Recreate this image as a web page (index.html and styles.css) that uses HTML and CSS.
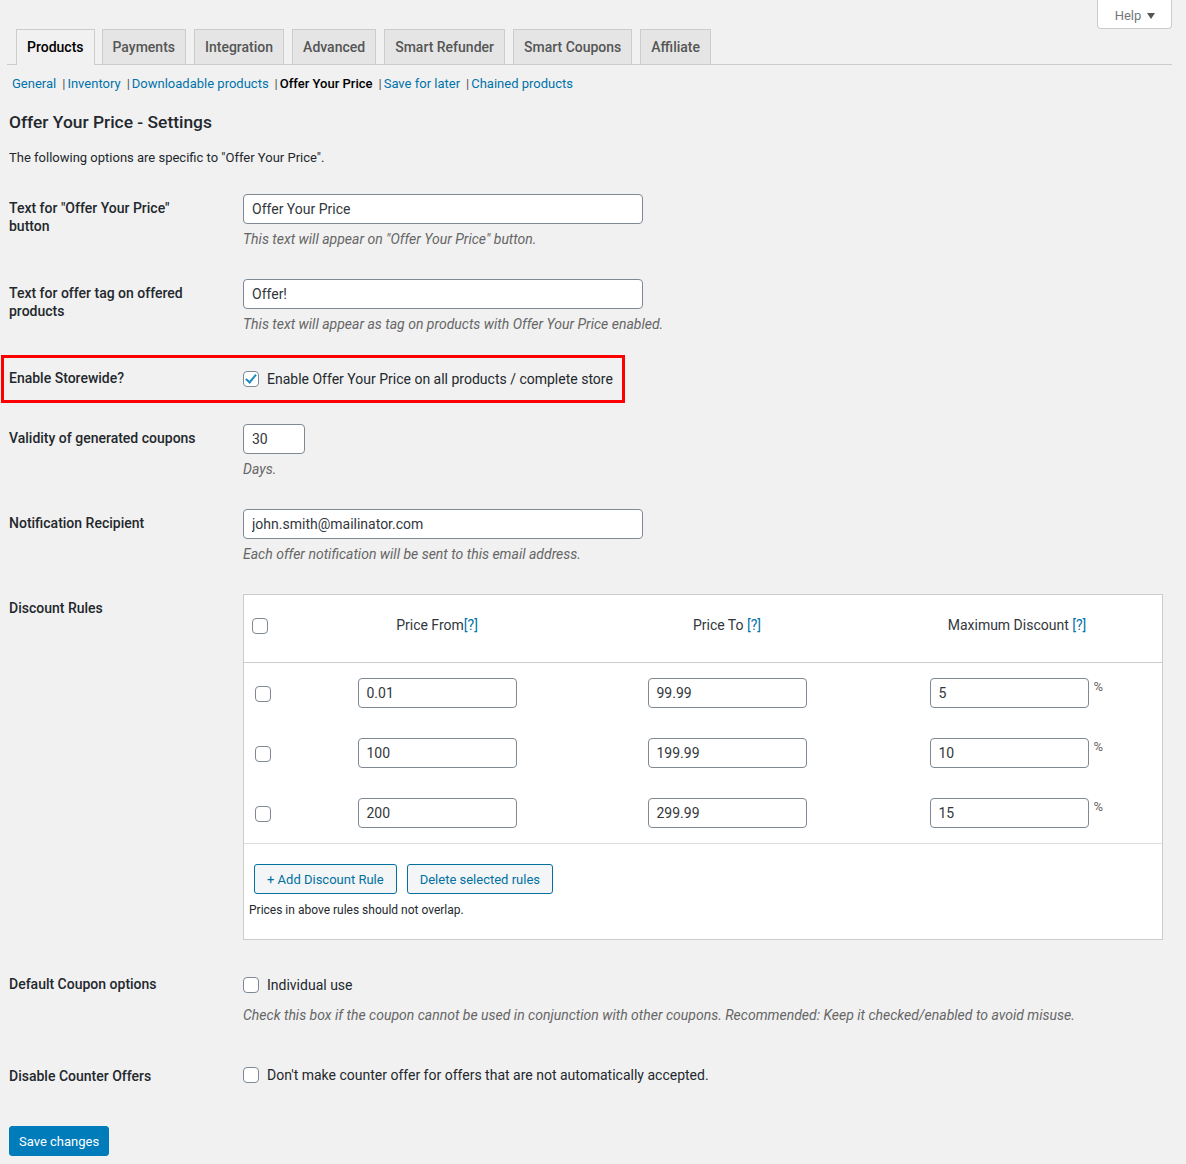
FILE: index.html
```
<!DOCTYPE html>
<html lang="en">
<head>
<meta charset="utf-8">
<title>Offer Your Price - Settings</title>
<link rel="stylesheet" href="styles.css">
</head>
<body>
<div class="wrap">
  <div class="meta">
    <button class="help" type="button">Help <span class="caret"></span></button>
  </div>
  <nav class="tabs">
    <a class="tab active">Products</a>
    <a class="tab">Payments</a>
    <a class="tab">Integration</a>
    <a class="tab">Advanced</a>
    <a class="tab">Smart Refunder</a>
    <a class="tab">Smart Coupons</a>
    <a class="tab">Affiliate</a>
  </nav>
  <ul class="subsub">
    <li><a class="sublink">General</a><span class="sep">|</span></li>
    <li><a class="sublink">Inventory</a><span class="sep">|</span></li>
    <li><a class="sublink">Downloadable products</a><span class="sep">|</span></li>
    <li><a class="sublink current">Offer Your Price</a><span class="sep">|</span></li>
    <li><a class="sublink">Save for later</a><span class="sep">|</span></li>
    <li><a class="sublink">Chained products</a></li>
  </ul>
  <div class="content">
    <h2 class="title">Offer Your Price - Settings</h2>
    <p class="intro">The following options are specific to "Offer Your Price".</p>

    <div class="row">
      <div class="label">Text for "Offer Your Price" button</div>
      <div class="field">
        <input class="text wide" type="text" value="Offer Your Price">
        <p class="desc">This text will appear on "Offer Your Price" button.</p>
      </div>
    </div>

    <div class="row">
      <div class="label">Text for offer tag on offered products</div>
      <div class="field">
        <input class="text wide" type="text" value="Offer!">
        <p class="desc">This text will appear as tag on products with Offer Your Price enabled.</p>
      </div>
    </div>

    <div class="row highlight">
      <div class="label">Enable Storewide?</div>
      <div class="field">
        <label class="check-line"><input class="cb" type="checkbox" checked> Enable Offer Your Price on all products / complete store</label>
      </div>
    </div>

    <div class="row">
      <div class="label">Validity of generated coupons</div>
      <div class="field">
        <input class="text short" type="text" value="30">
        <p class="desc">Days.</p>
      </div>
    </div>

    <div class="row">
      <div class="label">Notification Recipient</div>
      <div class="field">
        <input class="text wide" type="text" value="john.smith@mailinator.com">
        <p class="desc">Each offer notification will be sent to this email address.</p>
      </div>
    </div>

    <div class="row">
      <div class="label">Discount Rules</div>
      <div class="field">
        <div class="rules">
          <table class="rules-table">
            <thead>
              <tr>
                <th class="col-check head-check"><input class="cb" type="checkbox"></th>
                <th class="col">Price From<a class="tip">[?]</a></th>
                <th class="col">Price To <a class="tip">[?]</a></th>
                <th class="col">Maximum Discount <a class="tip">[?]</a></th>
              </tr>
            </thead>
            <tbody>
              <tr>
                <td class="col-check"><input class="cb" type="checkbox"></td>
                <td class="col"><input class="text rule" type="text" value="0.01"></td>
                <td class="col"><input class="text rule" type="text" value="99.99"></td>
                <td class="col"><input class="text rule" type="text" value="5"><span class="pct">%</span></td>
              </tr>
              <tr>
                <td class="col-check"><input class="cb" type="checkbox"></td>
                <td class="col"><input class="text rule" type="text" value="100"></td>
                <td class="col"><input class="text rule" type="text" value="199.99"></td>
                <td class="col"><input class="text rule" type="text" value="10"><span class="pct">%</span></td>
              </tr>
              <tr>
                <td class="col-check"><input class="cb" type="checkbox"></td>
                <td class="col"><input class="text rule" type="text" value="200"></td>
                <td class="col"><input class="text rule" type="text" value="299.99"></td>
                <td class="col"><input class="text rule" type="text" value="15"><span class="pct">%</span></td>
              </tr>
            </tbody>
          </table>
          <div class="rules-foot">
            <div class="btns">
              <button class="btn-sec" type="button">+ Add Discount Rule</button>
              <button class="btn-sec" type="button">Delete selected rules</button>
            </div>
            <p class="note">Prices in above rules should not overlap.</p>
          </div>
        </div>
      </div>
    </div>

    <div class="row coupon">
      <div class="label">Default Coupon options</div>
      <div class="field">
        <label class="check-line"><input class="cb" type="checkbox"> Individual use</label>
        <p class="desc">Check this box if the coupon cannot be used in conjunction with other coupons. Recommended: Keep it checked/enabled to avoid misuse.</p>
      </div>
    </div>

    <div class="row">
      <div class="label">Disable Counter Offers</div>
      <div class="field">
        <label class="check-line"><input class="cb" type="checkbox"> Don't make counter offer for offers that are not automatically accepted.</label>
      </div>
    </div>

    <button class="btn-primary" type="button">Save changes</button>
  </div>
</div>
</body>
</html>
```

FILE: styles.css
```
*, *::before, *::after { box-sizing: border-box; }

html, body {
  margin: 0;
  background: #f1f1f1;
}

body {
  font-family: Roboto, "Liberation Sans", sans-serif;
  font-size: 14px;
  color: #23282d;
  min-height: 1164px;
}

.wrap {
  padding: 0 14px 0 7px;
}

.meta {
  display: flex;
  justify-content: flex-end;
  height: 29px;
}

.help {
  margin-top: -1px;
  width: 75px;
  height: 30px;
  background: #fff;
  border: 1px solid #ccc;
  border-top: 0;
  border-radius: 0 0 4px 4px;
  font-family: inherit;
  font-size: 13px;
  color: #72777c;
  padding: 3px 0 0 1px;
  display: flex;
  align-items: center;
  justify-content: center;
  gap: 6px;
}

.caret {
  width: 0;
  height: 0;
  border-left: 4px solid transparent;
  border-right: 4px solid transparent;
  border-top: 6px solid #555;
  margin-top: 1px;
}

.tabs {
  display: flex;
  gap: 8px;
  padding-left: 9px;
  border-bottom: 1px solid #ccc;
  height: 36px;
}

.tab {
  display: block;
  height: 35px;
  padding: 5px 10px;
  line-height: 24px;
  font-size: 14px;
  font-weight: 500;
  color: #555;
  background: #e5e5e5;
  border: 1px solid #ccc;
  border-bottom: 0;
}

.tab.active {
  background: #f1f1f1;
  color: #000;
  height: 36px;
  margin-right: -1px;
}

.subsub {
  list-style: none;
  margin: 10px 0 0 5px;
  padding: 0;
  display: flex;
  font-size: 13px;
  line-height: 18px;
  color: #555;
}

.sep {
  margin: 0 2px 0 6px;
}

.sublink {
  color: #0073aa;
}

.sublink.current {
  color: #000;
  font-weight: 500;
}

.content {
  padding-left: 2px;
}

.title {
  margin: 17px 0 0;
  font-size: 17.4px;
  line-height: 24px;
  font-weight: 500;
  color: #23282d;
}

.intro {
  margin: 14px 0 0;
  padding-top: 1px;
  font-size: 13px;
  line-height: 18px;
}

.intro + .row {
  margin-top: 12px;
}

.row {
  display: flex;
  position: relative;
}

.label {
  width: 234px;
  flex: none;
  padding: 20px 30px 0 0;
  font-weight: 500;
  line-height: 18px;
  color: #23282d;
}

.field {
  flex: 1;
  padding: 15px 9px 15px 0;
}

.row.coupon .field {
  padding-bottom: 20px;
}

.row.coupon + .row .label {
  padding-top: 22px;
}

.row.highlight::after {
  content: "";
  position: absolute;
  left: -8px;
  top: 6px;
  width: 624px;
  height: 48px;
  border: 3px solid #f00;
  pointer-events: none;
}

.text {
  display: inline-block;
  height: 30px;
  border: 1px solid #7e8993;
  border-radius: 4px;
  background: #fff;
  padding: 0 8px;
  font-family: inherit;
  font-size: 14px;
  color: #32373c;
  vertical-align: middle;
  margin: 0;
}

.text.wide { width: 400px; }
.text.short { width: 62px; }
.text.rule { width: 159px; }

.desc {
  margin: 5px 0 0;
  font-size: 14px;
  line-height: 20px;
  font-style: italic;
  color: #666;
}

.check-line {
  display: flex;
  align-items: center;
  height: 30px;
  gap: 8px;
}

.cb {
  appearance: none;
  -webkit-appearance: none;
  width: 16px;
  height: 16px;
  margin: 0;
  border: 1px solid #7e8993;
  border-radius: 4px;
  background: #fff;
  position: relative;
  flex: none;
  vertical-align: middle;
}

.cb:checked::before {
  content: "";
  position: absolute;
  left: 4px;
  top: 0px;
  width: 6px;
  height: 11px;
  border-right: 2.5px solid #1e8cbe;
  border-bottom: 2.5px solid #1e8cbe;
  transform: rotate(40deg);
}

.rules {
  background: #fff;
  border: 1px solid #ccc;
}

.rules-table {
  width: 100%;
  border-collapse: collapse;
}

.rules-table th {
  font-weight: 400;
  font-size: 14px;
  line-height: 18px;
  color: #32373c;
  padding: 21px 0 28px;
  border-bottom: 1px solid #ccc;
}

.rules-table td {
  padding: 15px 0;
  height: 60px;
}

.col-check {
  width: 48px;
  text-align: left;
  padding-left: 11px !important;
}

.head-check {
  padding-left: 8px !important;
}

.col {
  width: 290px;
  text-align: center;
}

.tip {
  color: #0073aa;
}

.pct {
  display: inline-block;
  vertical-align: top;
  margin-left: 5px;
  padding-top: 1px;
  width: 11px;
  font-size: 13px;
  line-height: 16px;
  color: #666;
  text-align: left;
}

.rules-foot {
  border-top: 1px solid #ddd;
  padding: 20px 10px 20px 5px;
}

.btns {
  display: flex;
  gap: 10px;
  margin-left: 5px;
}

.btn-sec {
  height: 30px;
  padding: 0 12px;
  font-family: inherit;
  font-size: 13px;
  color: #0071a1;
  background: #f3f5f6;
  border: 1px solid #0071a1;
  border-radius: 3px;
}

.note {
  margin: 7px 0 0;
  font-size: 12px;
  line-height: 18px;
  color: #23282d;
}

.btn-primary {
  margin-top: 21px;
  height: 30px;
  padding: 0 9px;
  font-family: inherit;
  font-size: 13px;
  color: #fff;
  background: #007cba;
  border: 1px solid #007cba;
  border-radius: 3px;
}
```
